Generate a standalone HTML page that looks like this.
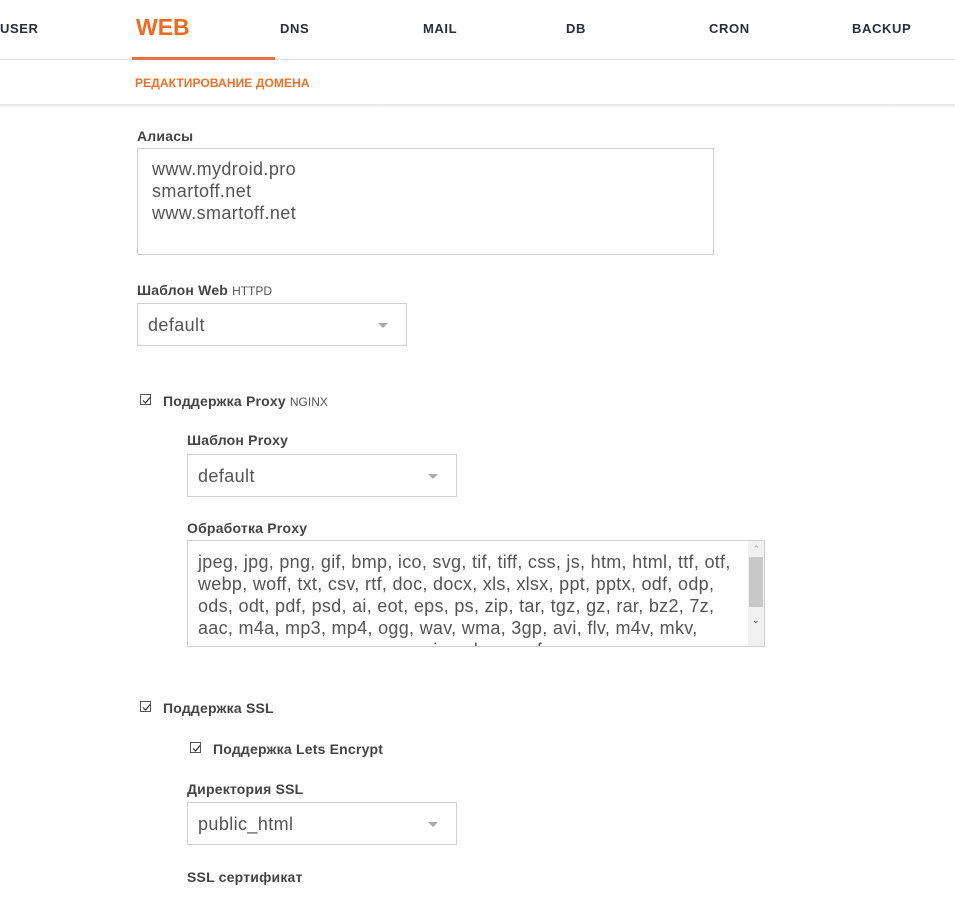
<!DOCTYPE html>
<html><head><meta charset="utf-8"><style>
*{margin:0;padding:0;box-sizing:border-box}
body{width:955px;height:904px;background:#fff;position:relative;overflow:hidden;font-family:"Liberation Sans",Arial,sans-serif}
.a{position:absolute;white-space:nowrap}
.nav{font-size:13px;font-weight:bold;color:#2c2c3c;top:21px;letter-spacing:0.6px}
.lbl{font-size:14px;font-weight:bold;color:#444;letter-spacing:0.2px}
.sm{font-size:12px;font-weight:normal;color:#555;margin-left:4px;letter-spacing:0}
.box{position:absolute;border:1px solid #d0d0d0;background:#fff}
.txt{font-size:18px;color:#555;line-height:22px;letter-spacing:0.4px}
.sel{font-size:18px;color:#555;padding:11px 0 0 10px;letter-spacing:0.4px}
.arr{position:absolute;right:18px;top:19px;width:0;height:0;border-left:5px solid transparent;border-right:5px solid transparent;border-top:5px solid #aaa}
.cb{position:absolute;width:11px;height:11px;border:1px solid #555;background:#fff}
.cb svg{position:absolute;left:1px;top:1px}
</style></head><body>
<div class="a nav" style="left:0">USER</div>
<div class="a" style="left:136px;top:14px;font-size:23px;font-weight:bold;color:#f26b1d;letter-spacing:0">WEB</div>
<div class="a nav" style="left:280px">DNS</div>
<div class="a nav" style="left:423px">MAIL</div>
<div class="a nav" style="left:566px">DB</div>
<div class="a nav" style="left:709px">CRON</div>
<div class="a nav" style="left:852px">BACKUP</div>
<div class="a" style="left:0;top:59px;width:955px;height:1px;background:#ddd"></div>
<div class="a" style="left:132px;top:57px;width:143px;height:3px;background:#ea7047"></div>
<div class="a" style="left:135px;top:76px;font-size:12px;font-weight:bold;color:#f0702a;letter-spacing:0.1px">РЕДАКТИРОВАНИЕ ДОМЕНА</div>
<div class="a" style="left:0;top:104px;width:955px;height:4px;background:linear-gradient(#e4e4e4,#f4f4f4 60%,#fff)"></div>

<div class="a lbl" style="left:137px;top:128px">Алиасы</div>
<div class="box" style="left:137px;top:148px;width:577px;height:107px;padding:9px 14px"><div class="txt">www.mydroid.pro<br>smartoff.net<br>www.smartoff.net</div></div>

<div class="a lbl" style="left:137px;top:282px">Шаблон Web<span class="sm">HTTPD</span></div>
<div class="box sel" style="left:137px;top:303px;width:270px;height:43px">default<div class="arr"></div></div>

<div class="cb" style="left:140px;top:394px"><svg width="9" height="9"><path d="M1 4.5L3.5 7L8 1.5" stroke="#333" stroke-width="1.2" fill="none"/></svg></div>
<div class="a lbl" style="left:163px;top:393px">Поддержка Proxy<span class="sm">NGINX</span></div>

<div class="a lbl" style="left:187px;top:432px">Шаблон Proxy</div>
<div class="box sel" style="left:187px;top:454px;width:270px;height:43px">default<div class="arr"></div></div>

<div class="a lbl" style="left:187px;top:520px">Обработка Proxy</div>
<div class="box" style="left:187px;top:540px;width:578px;height:107px;overflow:hidden;padding:10px 10px">
<div class="txt" style="letter-spacing:0.3px">jpeg, jpg, png, gif, bmp, ico, svg, tif, tiff, css, js, htm, html, ttf, otf,<br>webp, woff, txt, csv, rtf, doc, docx, xls, xlsx, ppt, pptx, odf, odp,<br>ods, odt, pdf, psd, ai, eot, eps, ps, zip, tar, tgz, gz, rar, bz2, 7z,<br>aac, m4a, mp3, mp4, ogg, wav, wma, 3gp, avi, flv, m4v, mkv,<br>mov, mpeg, mpg, wmv, exe, iso, dmg, swf</div>
<div style="position:absolute;right:0;top:0;width:16px;height:106px;background:#f1f1f1"></div>
<div style="position:absolute;right:1px;top:16px;width:14px;height:50px;background:#c8c8c8"></div>
<div style="position:absolute;right:4px;top:3px;font-size:9px;color:#aaa">&#8963;</div>
<div style="position:absolute;right:4px;top:74px;font-size:10px;color:#555">&#8964;</div>
</div>

<div class="cb" style="left:140px;top:701px"><svg width="9" height="9"><path d="M1 4.5L3.5 7L8 1.5" stroke="#333" stroke-width="1.2" fill="none"/></svg></div>
<div class="a lbl" style="left:163px;top:700px">Поддержка SSL</div>
<div class="cb" style="left:190px;top:742px"><svg width="9" height="9"><path d="M1 4.5L3.5 7L8 1.5" stroke="#333" stroke-width="1.2" fill="none"/></svg></div>
<div class="a lbl" style="left:213px;top:741px">Поддержка Lets Encrypt</div>

<div class="a lbl" style="left:187px;top:781px">Директория SSL</div>
<div class="box sel" style="left:187px;top:802px;width:270px;height:43px">public_html<div class="arr"></div></div>

<div class="a lbl" style="left:187px;top:869px">SSL сертификат</div>
</body></html>
